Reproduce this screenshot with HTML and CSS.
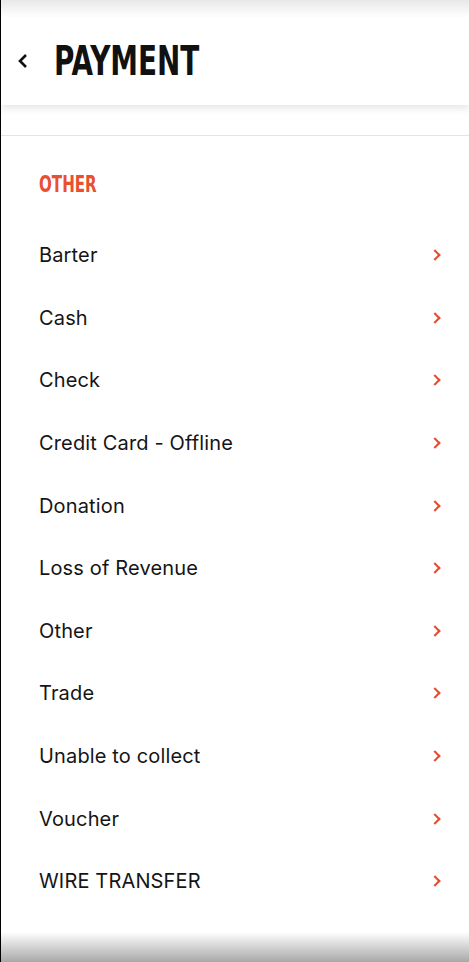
FILE: index.html
```html
<!DOCTYPE html>
<html lang="en">

<head>
    <meta charset="UTF-8">
    <title>Payment</title>
    <link rel="stylesheet" href="styles.css">
</head>

<body>
    <div class="screen">
        <div class="top-fade"></div>

        <header class="header">
            <button class="back" aria-label="Back">
                <svg width="12" height="16" viewBox="0 0 12 16">
                    <path d="M9 2 L3 8 L9 14" fill="none" stroke="#111" stroke-width="2.6" />
                </svg>
            </button>
            <h1 class="title"><span>PAYMENT</span></h1>
        </header>

        <div class="divider"></div>

        <main class="content">
            <h2 class="section-label"><span>OTHER</span></h2>

            <ul class="list">
                <li class="row"><span>Barter</span><i class="chev"></i></li>
                <li class="row"><span>Cash</span><i class="chev"></i></li>
                <li class="row"><span>Check</span><i class="chev"></i></li>
                <li class="row"><span>Credit Card - Offline</span><i class="chev"></i></li>
                <li class="row"><span>Donation</span><i class="chev"></i></li>
                <li class="row"><span>Loss of Revenue</span><i class="chev"></i></li>
                <li class="row"><span>Other</span><i class="chev"></i></li>
                <li class="row"><span>Trade</span><i class="chev"></i></li>
                <li class="row"><span>Unable to collect</span><i class="chev"></i></li>
                <li class="row"><span>Voucher</span><i class="chev"></i></li>
                <li class="row"><span>WIRE TRANSFER</span><i class="chev"></i></li>
            </ul>
        </main>

        <div class="bottom-fade"></div>
    </div>
</body>

</html>
```

FILE: styles.css
```css
* {
    margin: 0;
    padding: 0;
    box-sizing: border-box;
}

body {
    background: #fff;
    font-family: Inter, "Noto Sans", sans-serif;
    color: #151515;
}

.screen {
    position: relative;
    height: 962px;
    border-left: 1px solid #000;
    overflow: hidden;
    display: flex;
    flex-direction: column;
}

.top-fade {
    height: 17px;
    background: linear-gradient(#e8e8e8, #fff);
}

.header {
    height: 88px;
    display: flex;
    align-items: center;
    background: #fff;
    box-shadow: 0 4px 7px rgba(0, 0, 0, 0.09);
    position: relative;
    z-index: 1;
}

.back {
    border: none;
    background: none;
    width: 53px;
    height: 30px;
    display: flex;
    align-items: center;
    padding-left: 16px;
}

.title {
    font-family: "DejaVu Sans Condensed", "DejaVu Sans", sans-serif;
    font-weight: bold;
    font-size: 41px;
    line-height: 1;
    color: #111;
}

.title span {
    display: inline-block;
    transform: scaleX(0.755);
    transform-origin: left center;
}

.divider {
    margin-top: 30px;
    height: 1px;
    background: #e4e4e4;
}

.content {
    padding: 37px 26px 0 38px;
    flex: 1;
}

.section-label {
    font-family: "DejaVu Sans Condensed", "DejaVu Sans", sans-serif;
    font-weight: bold;
    font-size: 23px;
    line-height: 1;
    color: #e8502f;
    height: 51px;
}

.section-label span {
    display: inline-block;
    transform: scaleX(0.73);
    transform-origin: left center;
}

.list {
    list-style: none;
}

.row {
    height: 62.6px;
    display: flex;
    align-items: center;
    justify-content: space-between;
    font-size: 20px;
    letter-spacing: 0.15px;
}

.chev {
    width: 8px;
    height: 8px;
    border-top: 2.5px solid #e64a2e;
    border-right: 2.5px solid #e64a2e;
    transform: rotate(45deg);
    margin-right: 4px;
}

.bottom-fade {
    position: absolute;
    left: 0;
    right: 0;
    bottom: 0;
    height: 30px;
    background: linear-gradient(rgba(255, 255, 255, 0), #a8a8a8);
}
```
